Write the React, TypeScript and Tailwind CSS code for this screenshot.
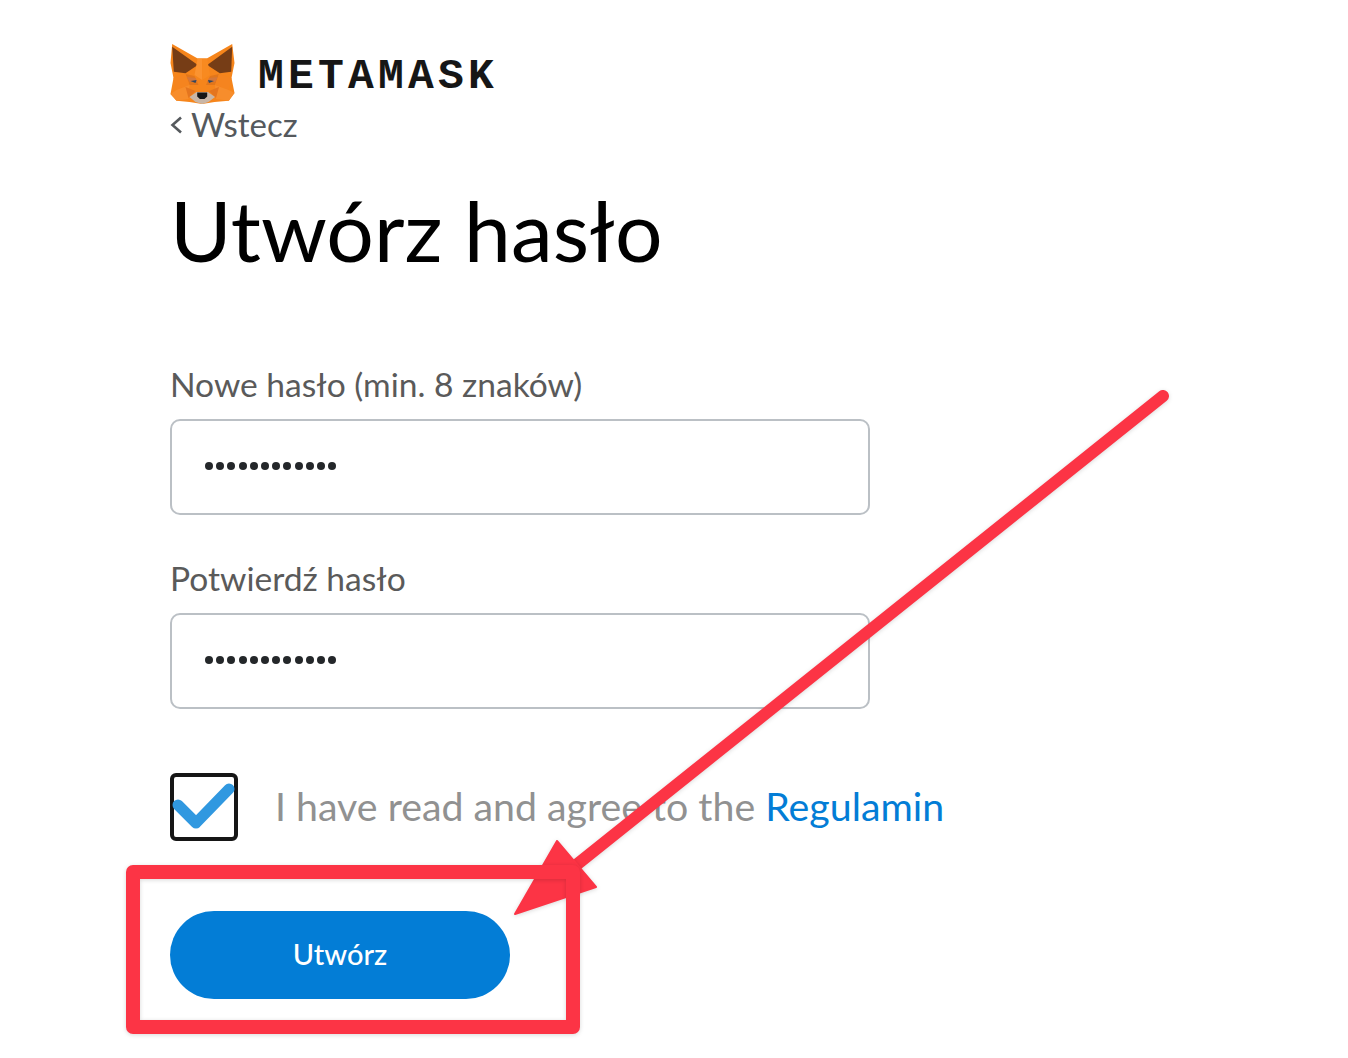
import React from 'react';

const bodyFont = "font-['Lato','Open_Sans',sans-serif]";

function FoxLogo() {
  return (
    <svg viewBox="0 0 64 60" className="w-[65px] h-[60px] shrink-0">
      <polygon points="1.7,0 26.7,14.3 36.7,14.3 61.7,0 64,19 61,34 64,49 58.3,56.7 44,58 31.7,60 19,58 6,56.7 0,50 3,34 0,19" fill="#f6851b" />
      <polygon points="1.7,2.7 27.3,21 15,29.3 3.3,27.7" fill="#763d16" />
      <polygon points="61.7,2.7 36.7,21 49.3,29.3 60.7,27.7" fill="#763d16" />
      <polygon points="27,15 31.7,15 31.7,36 24,31" fill="#fb9330" />
      <polygon points="36.7,15 31.7,15 31.7,36 39.5,31" fill="#f88a20" />
      <polygon points="15,30 24,32 28,41 19,41" fill="#e2761b" />
      <polygon points="48.5,30 39.5,32 35.5,41 44.5,41" fill="#e2761b" />
      <polygon points="16,33 25,34 27,38 19,38" fill="#d5773a" />
      <polygon points="47.5,33 38.5,34 36.5,38 44.5,38" fill="#d5773a" />
      <polygon points="20,37 26,36 25,39" fill="#31465f" />
      <polygon points="43.5,37 37.5,36 38.5,39" fill="#31465f" />
      <polygon points="3,34 15,30 19,41 6,46" fill="#f5841f" />
      <polygon points="61,34 48.5,30 44.5,41 58,46" fill="#f5841f" />
      <polygon points="0,50 6,46 19,41 18,55 6,56.7" fill="#f78d2c" />
      <polygon points="64,49 58,46 44.5,41 45.5,55 58.3,56.7" fill="#f78d2c" />
      <polygon points="15,43 25,47 18,54" fill="#e4751f" />
      <polygon points="48.5,43 38.5,47 45.5,54" fill="#e4751f" />
      <polygon points="19,53 26,48 37.5,48 44.5,53 38,58 31.7,60 25,58" fill="#c9b6a6" />
      <polygon points="26.7,48.5 36.7,48.5 36.7,52.5 34,55 29.4,55 26.7,52.5" fill="#161616" />
    </svg>
  );
}

function PasswordField({ label }: { label: string }) {
  return (
    <div className="flex flex-col">
      <label className="text-[33.6px] leading-[38px] text-[#5a5a5a]">{label}</label>
      <div className="mt-[16px] flex h-[96px] w-[700px] items-center rounded-[10px] border-2 border-[#bbc0c5] pb-[2px] pl-[33px]">
        <div className="flex gap-[3.2px]">
          {Array.from({ length: 12 }).map((_, i) => (
            <span key={i} className="h-[8px] w-[8px] rounded-full bg-[#24272a]" />
          ))}
        </div>
      </div>
    </div>
  );
}

export default function App() {
  return (
    <div className={`relative h-[1058px] w-[1348px] overflow-hidden bg-white pl-[170px] pt-[44px] ${bodyFont}`}>
      {/* Logo */}
      <div className="flex h-[60px] items-center gap-[23px]">
        <FoxLogo />
        <span className="pt-[5px] font-['Liberation_Mono',monospace] text-[43px] font-bold leading-[55px] tracking-[4.2px] text-[#161616]">METAMASK</span>
      </div>

      <div className="mt-[1px] flex h-[40px] items-center gap-[9px] text-[33px] text-[#55595d]">
        <svg viewBox="0 0 12 18" className="h-[18px] w-[12px]">
          <polyline points="11,1.5 2.5,9 11,16.5" fill="none" stroke="#55595d" strokeWidth="2.6" />
        </svg>
        <span>Wstecz</span>
      </div>

      <h1 className="mt-[37px] text-[84px] font-normal leading-[96px] text-black">Utwórz hasło</h1>

      <div className="mt-[87px] flex flex-col gap-[44px]">
        <PasswordField label="Nowe hasło (min. 8 znaków)" />
        <PasswordField label="Potwierdź hasło" />
      </div>

      {/* Terms */}
      <div className="mt-[64px] flex items-center gap-[37px]">
        <div className="relative h-[68px] w-[68px] rounded-[6px] border-[4px] border-[#161616]">
          <svg viewBox="0 0 68 68" className="absolute -left-[4px] -top-[4px] h-[68px] w-[68px]">
            <polyline points="8,32 26,50 59,16" fill="none" stroke="#3098e0" strokeWidth="11" strokeLinejoin="round" strokeLinecap="round" />
          </svg>
        </div>
        <p className="pb-[2px] text-[39.3px] leading-[44px] text-[#919191]">
          I have read and agree to the <span className="text-[#037dd6]">Regulamin</span>
        </p>
      </div>

      <button className="mt-[70px] flex h-[88px] w-[340px] items-center justify-center rounded-full bg-[#037dd6] pb-[3px] text-[29px] font-medium text-white">
        Utwórz
      </button>

      {/* Red annotation over the page */}
      <svg viewBox="0 0 1348 1058" className="pointer-events-none absolute left-0 top-0 h-[1058px] w-[1348px]">
        <line x1="1163" y1="396" x2="570" y2="870" stroke="#fc3445" strokeWidth="12" strokeLinecap="round" className="drop-shadow-sm" />
        <polygon points="557,841 596,887 515,914" fill="#fc3445" stroke="#fc3445" strokeWidth="2" strokeLinejoin="round" className="drop-shadow-sm" />
        <rect x="133" y="872" width="440" height="155" fill="none" stroke="#fc3445" strokeWidth="14" strokeLinejoin="round" className="drop-shadow-sm" />
      </svg>
    </div>
  );
}
